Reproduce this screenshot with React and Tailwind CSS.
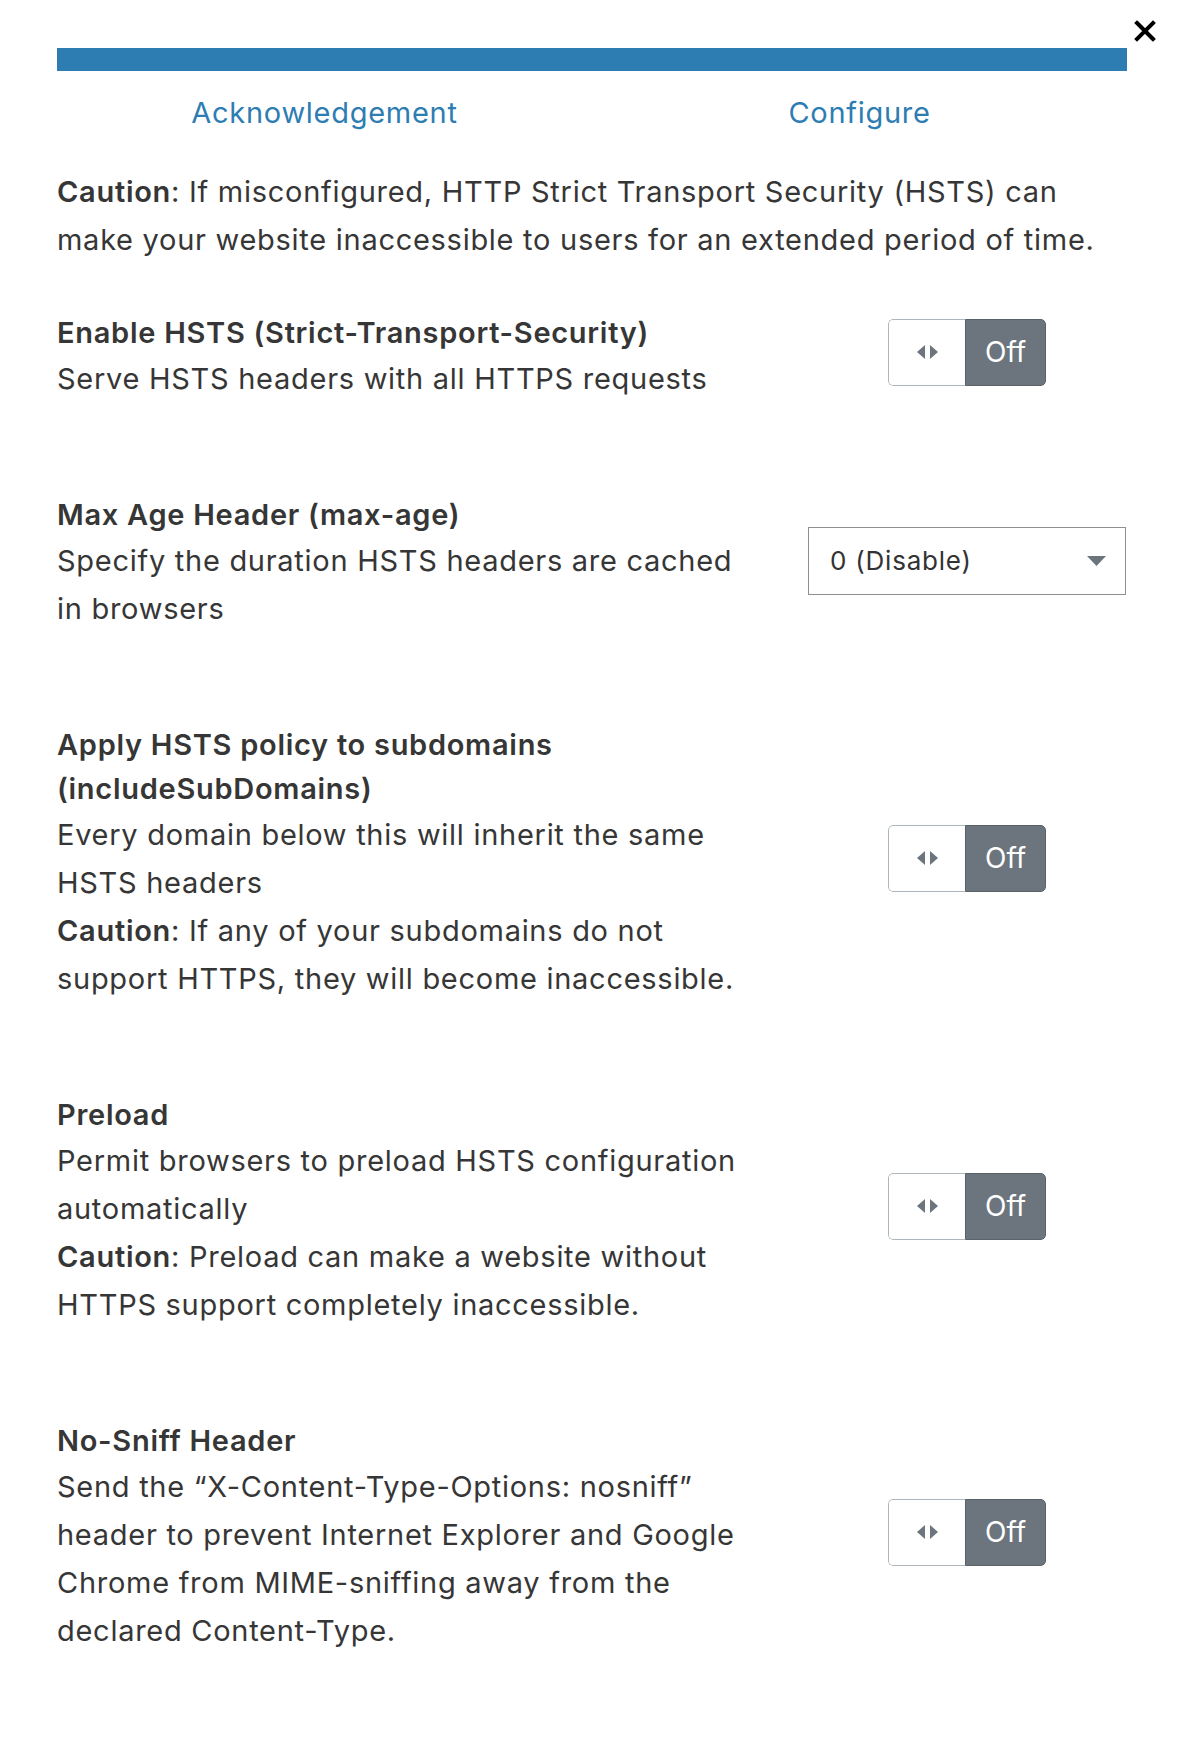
import { useState } from "react";

const SECTIONS = [
    {
        id: "hsts",
        title: "Enable HSTS (Strict-Transport-Security)",
        body: ["Serve HSTS headers with all HTTPS requests"],
        control: "toggle",
    },
    {
        id: "maxAge",
        title: "Max Age Header (max-age)",
        body: ["Specify the duration HSTS headers are cached in browsers"],
        control: "select",
    },
    {
        id: "subdomains",
        title: "Apply HSTS policy to subdomains (includeSubDomains)",
        body: ["Every domain below this will inherit the same HSTS headers"],
        caution: "If any of your subdomains do not support HTTPS, they will become inaccessible.",
        control: "toggle",
    },
    {
        id: "preload",
        title: "Preload",
        body: ["Permit browsers to preload HSTS configuration automatically"],
        caution: "Preload can make a website without HTTPS support completely inaccessible.",
        control: "toggle",
    },
    {
        id: "nosniff",
        title: "No-Sniff Header",
        body: [
            "Send the \u201cX-Content-Type-Options: nosniff\u201d header to prevent Internet Explorer and Google Chrome from MIME-sniffing away from the declared Content-Type.",
        ],
        control: "toggle",
    },
];

/* 閉じるボタン */
function CloseButton() {
    return (
        <button className="absolute right-[28px] top-[20px] w-[22px] h-[22px] flex items-center justify-center">
            <svg width="22" height="22" viewBox="0 0 22 22">
                <path
                    d="M3 3 L19 19 M19 3 L3 19"
                    stroke="#000"
                    strokeWidth="4"
                    strokeLinecap="square"
                />
            </svg>
        </button>
    );
}

/* トグル */
function Toggle({ on, onToggle }) {
    return (
        <button
            onClick={onToggle}
            className="flex h-[67px] w-[158px] rounded-[5px] overflow-hidden tracking-normal"
        >
            <span className="flex w-[77px] h-full items-center justify-center gap-[5px] bg-white border-[1.5px] border-r-0 border-[#adb5bd] rounded-l-[5px]">
                <svg width="8" height="14" viewBox="0 0 8 14">
                    <path d="M8 0 L0 7 L8 14 Z" fill="#6c757d" />
                </svg>
                <svg width="8" height="14" viewBox="0 0 8 14">
                    <path d="M0 0 L8 7 L0 14 Z" fill="#6c757d" />
                </svg>
            </span>
            <span className="flex flex-1 h-full items-center justify-center bg-[#6c757d] border-[1.5px] border-[#5a6268] rounded-r-[5px] text-white text-[28px]">
                {on ? "On" : "Off"}
            </span>
        </button>
    );
}

/* セレクト */
function MaxAgeSelect() {
    return (
        <div className="flex h-[68px] w-[318px] items-center justify-between border-[1.5px] border-[#8f8f8f] pl-[21px] pr-[19px] text-[26px] tracking-[0.03em] text-[#333]">
            <span className="-mt-[1px]">0 (Disable)</span>
            <svg width="19" height="10" viewBox="0 0 19 10">
                <path d="M0 0 L19 0 L9.5 10 Z" fill="#6c757d" />
            </svg>
        </div>
    );
}

function Section({ item, on, onToggle }) {
    return (
        <div className="flex items-center">
            <div className="w-[720px] pr-[20px]">
                <h3 className="font-semibold text-[29px] leading-[44px]">
                    {item.title}
                </h3>
                <div className="text-[29px] leading-[48px]">
                    {item.body.map((b) => (
                        <p key={b}>{b}</p>
                    ))}
                    {item.caution && (
                        <p>
                            <b className="font-semibold">Caution</b>: {item.caution}
                        </p>
                    )}
                </div>
            </div>
            <div
                className={`flex w-[320px] ml-auto justify-center ${
                    item.control === "select" ? "mb-[4px]" : "mb-[10px]"
                }`}
            >
                {item.control === "select" ? (
                    <MaxAgeSelect />
                ) : (
                    <Toggle on={on} onToggle={onToggle} />
                )}
            </div>
        </div>
    );
}

export default function App() {
    const [state, setState] = useState({});

    return (
        <div className="relative w-[1184px] min-h-[1740px] bg-white text-[#363636] tracking-[0.045em] font-['Inter','Liberation_Sans',sans-serif]">
            <CloseButton />

            <div className="px-[57px] pt-[48px]">
                {/* プログレスバー */}
                <div className="h-[23px] bg-[#2d7db3]" />

                {/* タブ */}
                <div className="grid grid-cols-2 mt-[18px] text-[29px] leading-[48px] text-[#2d7db3]">
                    <button className="text-center">Acknowledgement</button>
                    <button className="text-center">Configure</button>
                </div>

                <p className="mt-[31px] text-[29px] leading-[48px]">
                    <b className="font-semibold">Caution</b>: If misconfigured, HTTP Strict
                    Transport Security (HSTS) can make your website inaccessible to users for
                    an extended period of time.
                </p>

                <div className="mt-[47px] flex flex-col gap-[90px]">
                    {SECTIONS.map((s) => (
                        <Section
                            key={s.id}
                            item={s}
                            on={!!state[s.id]}
                            onToggle={() =>
                                setState((p) => ({ ...p, [s.id]: !p[s.id] }))
                            }
                        />
                    ))}
                </div>
            </div>
        </div>
    );
}
